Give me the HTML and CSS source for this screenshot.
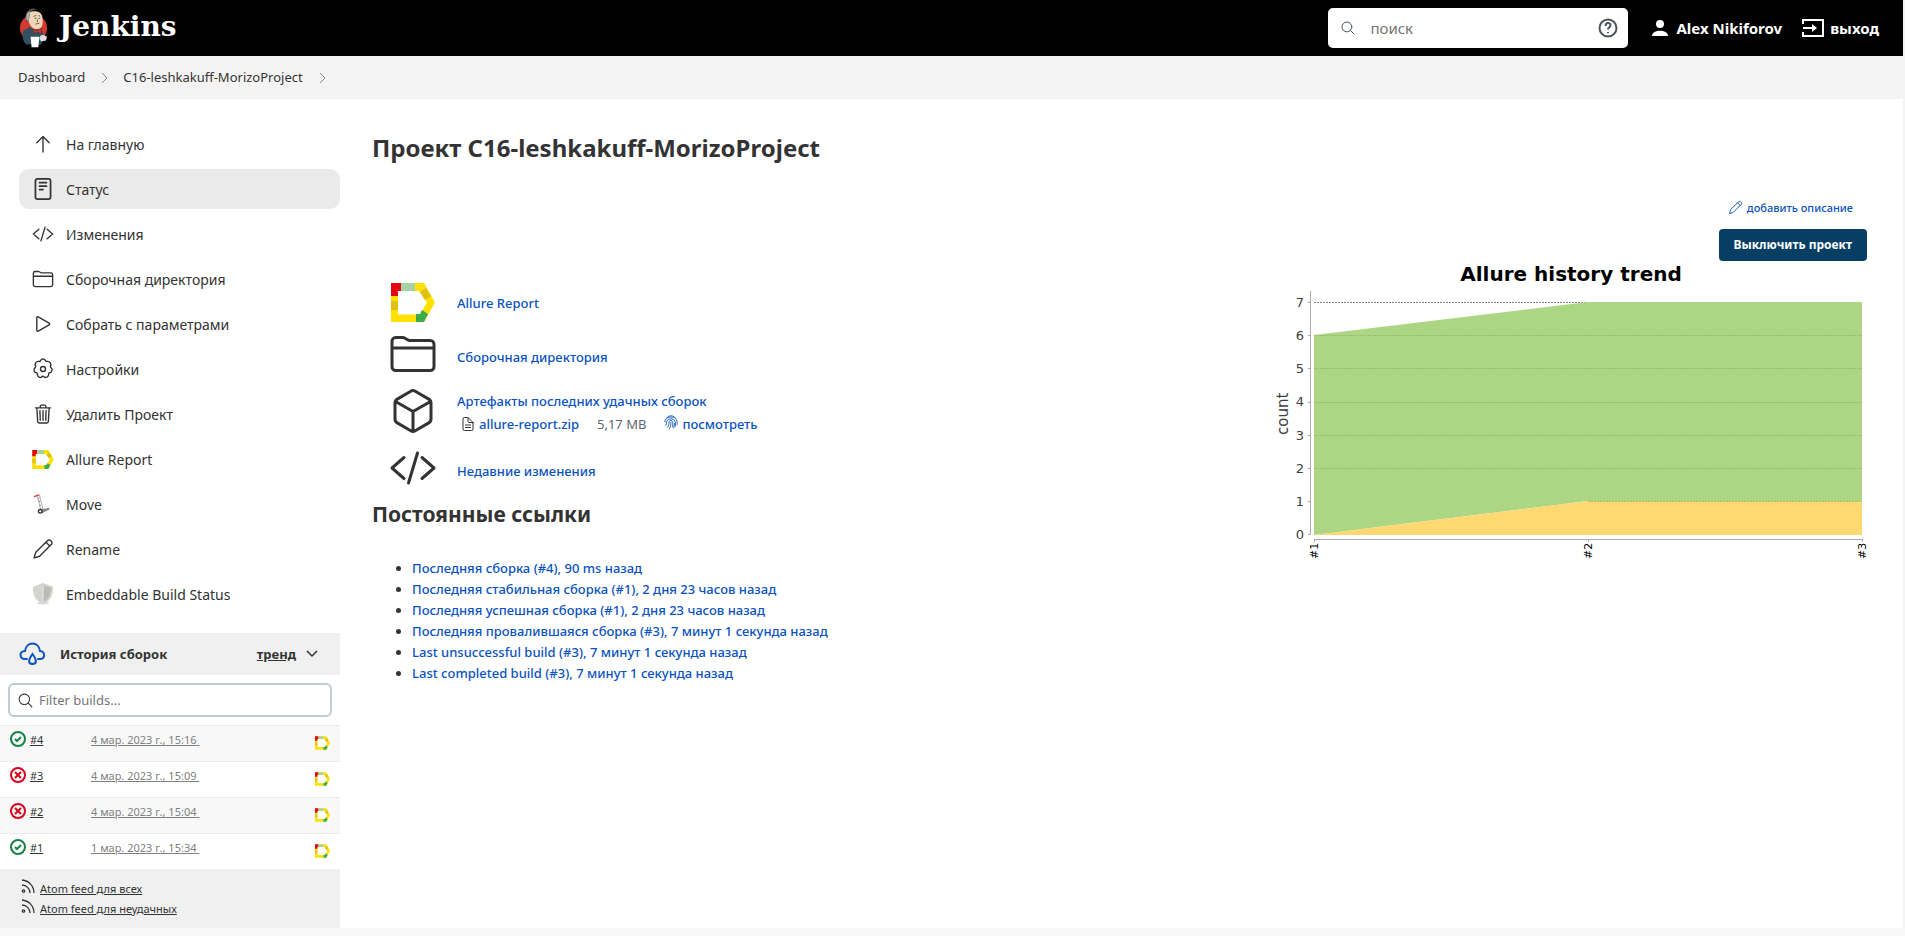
FILE: index.html
```html
<!DOCTYPE html>
<html lang="ru">
<head>
<meta charset="utf-8">
<title>C16-leshkakuff-MorizoProject [Jenkins]</title>
<link rel="stylesheet" href="styles.css">
</head>
<body>
<svg class="defs" aria-hidden="true">
  <symbol id="allure" viewBox="0 0 44 39">
    <path fill="#ffe000" d="M0 0h33l11 19.500-11 19.500H0z"/>
    <path fill="#fff" d="M7 8h21l8 11.500-7 12H7z"/>
    <path fill="#e30613" d="M0 0h10v8H7v5H0z"/>
    <path fill="#a5d1a4" d="M10 0h14v8H10z"/>
    <path fill="#e0c010" d="M0 18h7v9H0zM29 9l6-4 5 8-6 4z"/>
    <path fill="#3cac49" d="M25 31h4l2-4 6 4-4 8h-8z"/>
  </symbol>
  <symbol id="folder" viewBox="0 0 512 512">
    <path d="M440 432H72a40 40 0 01-40-40V120a40 40 0 0140-40h75.890a40 40 0 0122.190 6.720l27.840 18.560a40 40 0 0022.190 6.720H440a40 40 0 0140 40v240a40 40 0 01-40 40zM32 192h448"/>
  </symbol>
  <symbol id="code" viewBox="0 0 512 512">
    <path d="M160 368L32 256l128-112M352 368l128-112-128-112M304 96l-96 320"/>
  </symbol>
  <symbol id="pencil" viewBox="0 0 512 512">
    <path d="M364 60a48 48 0 0168 0l20 20a48 48 0 010 68L178 424 48 464l40-130zM326 98l88 88"/>
  </symbol>
  <symbol id="search" viewBox="0 0 512 512">
    <circle cx="221" cy="221" r="157"/><path d="M338 338l110 110"/>
  </symbol>
  <symbol id="ok" viewBox="0 0 16 16"><circle cx="8" cy="8" r="7"/><path d="M5 8l2 2 4-4"/></symbol>
  <symbol id="fail" viewBox="0 0 16 16"><circle cx="8" cy="8" r="7"/><path d="M5 5l6 6M11 5l-6 6"/></symbol>
  <symbol id="rss" viewBox="0 0 16 16"><path d="M2 1a13 13 0 0112 13M2 6a8 8 0 018 8"/><circle cx="3.500" cy="12" r="1.200"/></symbol>
</svg>
<div class="page">
  <header class="header">
    <a class="brand" href="#">
      <svg class="butler" viewBox="0 0 30 42" aria-hidden="true">
        <circle cx="15" cy="21" r="14" fill="#d33833"/>
        <path fill="#335061" d="M4 24l7-4 5 3 7-1 3 7-3 9H8c-4-2-5-9-4-14z"/>
        <path fill="#f0d6b7" d="M8 8c2-6 15-6 16 1 1 6 1 12-4 13-6 1-9-4-10-8-2-2-3-4-2-6z"/>
        <path fill="#52555c" d="M8 15c-2-5-2-10 3-13 3-2 6-1 7 0-4 0-7 2-7 6l-1 5-1 2z"/>
        <path fill="#b8b6b0" d="M8 13c-1-4 0-8 3-9l1 1c-2 2-2 5-2 8z"/>
        <path fill="none" stroke="#444" stroke-width=".800" d="M15 9l3-1M20 8l2 1M16 11h2M20 11h2M19 12v3M17 17l4-1"/>
        <path fill="#d33833" stroke="#6d1c1a" stroke-width=".500" d="M15 22l4 2 4-3v6l-4-2-3 2z"/>
        <path fill="#fff" d="M12 30h9l-1 11h-7z"/>
        <path fill="#ddd" d="M22 29l3-1 4 2-1 4-5 1-2-3z"/>
      </svg>
      <span class="brand-name">Jenkins</span>
    </a>
    <form class="search" role="search">
      <svg class="icon search-icon"><use href="#search"/></svg>
      <input class="search-input" type="search" placeholder="поиск" aria-label="поиск">
      <a class="help" href="#" aria-label="Справка">
        <svg viewBox="0 0 20 20"><circle cx="10" cy="10" r="8.500"/><path d="M7.500 8c0-4 5-4 5-.800 0 2-2.500 2-2.500 4.300M10 14v1.200"/></svg>
      </a>
    </form>
    <a class="account" href="#">
      <svg class="user-icon" viewBox="0 0 16 18"><circle cx="8" cy="5" r="4"/><path d="M0 17c0-7 16-7 16 0z"/></svg>
      Alex Nikiforov
    </a>
    <a class="account logout" href="#">
      <svg class="logout-icon" viewBox="0 0 22 18"><path d="M1 5V1h20v16H1v-4M1 9h11"/><path class="solid" d="M10 5l5 4-5 4z"/></svg>
      выход
    </a>
  </header>

  <nav class="crumbs" aria-label="Навигация">
    <a href="#">Dashboard</a>
    <svg viewBox="0 0 8 12"><path d="M2 1l5 5-5 5"/></svg>
    <a href="#">C16-leshkakuff-MorizoProject</a>
    <svg viewBox="0 0 8 12"><path d="M2 1l5 5-5 5"/></svg>
  </nav>

  <div class="body">
    <aside class="side">
      <nav class="tasks">
        <a class="task" href="#"><svg class="icon task-icon" viewBox="0 0 512 512"><path d="M112 228L256 84l144 144M256 104v340"/></svg>На главную</a>
        <a class="task active" href="#"><svg class="icon task-icon strong" viewBox="0 0 512 512"><rect x="80" y="20" width="352" height="472" rx="48"/><path d="M176 110h160M176 190h160M176 270h80"/></svg>Статус</a>
        <a class="task" href="#"><svg class="icon task-icon"><use href="#code"/></svg>Изменения</a>
        <a class="task" href="#"><svg class="icon task-icon"><use href="#folder"/></svg>Сборочная директория</a>
        <a class="task" href="#"><svg class="icon task-icon" viewBox="0 0 512 512"><path d="M112 111v290c0 17 18 28 33 20l254-145c15-9 15-31 0-40L145 91c-15-8-33 3-33 20z"/></svg>Собрать с параметрами</a>
        <a class="task" href="#"><svg class="icon task-icon" viewBox="0 0 512 512"><circle cx="256" cy="256" r="58"/><path d="M204 52q12-28 52-28t52 28q10 36 48 26 40-6 66 30t16 66q-24 30 6 52 38 30 18 74-10 40-48 42-34 4-26 44 2 38-40 60-38 22-66-10-26-26-52 0-28 32-66 10-42-22-40-60 8-40-26-44-38-2-48-42-10-44 18-74 30-22 6-52-10-30 16-66t66-30q38 10 48-26z"/></svg>Настройки</a>
        <a class="task" href="#"><svg class="icon task-icon" viewBox="0 0 512 512"><path d="M112 112l20 320c1 20 14 32 32 32h184c18 0 31-12 32-32l20-320M80 112h352M192 112V72c0-14 10-24 24-24h80c14 0 24 10 24 24v40M256 176v224M184 176l8 224M328 176l-8 224"/></svg>Удалить Проект</a>
        <a class="task" href="#"><svg class="task-icon allure"><use href="#allure"/></svg>Allure Report</a>
        <a class="task" href="#"><svg class="task-icon" viewBox="0 0 24 24"><path d="M7 3l4 16" stroke="#aaa" stroke-width="3.500"/><path d="M7 3l4 16" stroke="#fff" stroke-width="1.500"/><path d="M7 5l3 12" stroke="#555" stroke-dasharray="1 3"/><path d="M2 4l6-2" stroke="#e33" stroke-width="1.500"/><path d="M9 18l10-2v2l-8 4z" fill="#888"/><circle cx="9" cy="20" r="2" fill="#fff" stroke="#333" stroke-width="1.500"/></svg>Move</a>
        <a class="task" href="#"><svg class="icon task-icon"><use href="#pencil"/></svg>Rename</a>
        <a class="task" href="#"><svg class="task-icon" viewBox="0 0 24 24"><ellipse cx="12" cy="22" rx="7" ry="1.500" fill="#ddd"/><path d="M12 0l11 4c0 9-2 15-11 19C3 19 1 13 1 4z" fill="#d3d4d0"/><path d="M12 3v18c7-3 8-9 9-16z" fill="#b9bbb6"/><path d="M12 3v18" stroke="#eee"/></svg>Embeddable Build Status</a>
      </nav>

      <section class="history">
        <div class="history-head">
          <svg class="cloud" viewBox="0 0 26 24"><path d="M8 17H6C0 17 0 9 6 9c1-10 14-10 15 0 5 0 6 8 0 8h-2"/><path d="M13.500 12c-5 7-4 10 0 10s5-3 0-10z"/></svg>
          <span class="history-title">История сборок</span>
          <a class="trend" href="#">тренд</a>
          <svg class="chevron" viewBox="0 0 12 8"><path d="M1 1l5 5 5-5"/></svg>
        </div>
        <div class="filter">
          <svg class="icon filter-icon"><use href="#search"/></svg>
          <input class="filter-input" type="search" placeholder="Filter builds..." aria-label="Filter builds">
        </div>
        <ul class="builds">
          <li class="build"><svg class="state ok"><use href="#ok"/></svg><a class="num" href="#">#4</a><a class="date" href="#">4 мар. 2023 г., 15:16&nbsp;</a><svg class="build-allure"><use href="#allure"/></svg></li>
          <li class="build"><svg class="state fail"><use href="#fail"/></svg><a class="num" href="#">#3</a><a class="date" href="#">4 мар. 2023 г., 15:09&nbsp;</a><svg class="build-allure"><use href="#allure"/></svg></li>
          <li class="build"><svg class="state fail"><use href="#fail"/></svg><a class="num" href="#">#2</a><a class="date" href="#">4 мар. 2023 г., 15:04&nbsp;</a><svg class="build-allure"><use href="#allure"/></svg></li>
          <li class="build"><svg class="state ok"><use href="#ok"/></svg><a class="num" href="#">#1</a><a class="date" href="#">1 мар. 2023 г., 15:34&nbsp;</a><svg class="build-allure"><use href="#allure"/></svg></li>
        </ul>
        <div class="feeds">
          <div class="feed"><svg><use href="#rss"/></svg><a href="#">Atom feed для всех</a></div>
          <div class="feed"><svg><use href="#rss"/></svg><a href="#">Atom feed для неудачных</a></div>
        </div>
      </section>
    </aside>

    <main class="main">
      <h1>Проект C16-leshkakuff-MorizoProject</h1>
      <div class="actions">
        <a class="describe" href="#"><svg class="icon"><use href="#pencil"/></svg>добавить описание</a>
        <button class="disable" type="button">Выключить проект</button>
      </div>
      <div class="columns">
        <div class="overview">
          <div class="links">
            <div class="link-row"><svg class="big allure"><use href="#allure"/></svg><a href="#">Allure Report</a></div>
            <div class="link-row low"><svg class="icon big"><use href="#folder"/></svg><a href="#">Сборочная директория</a></div>
            <div class="link-row artifacts"><svg class="icon big" viewBox="0 0 512 512"><path d="M448 341V171a48 48 0 00-24-42L280 45a48 48 0 00-48 0L88 129a48 48 0 00-24 42v170a48 48 0 0024 42l144 84a48 48 0 0048 0l144-84a48 48 0 0024-42zM69 154l187 108 187-108M256 474V262"/></svg>
              <div class="artifact-text">
                <a href="#">Артефакты последних удачных сборок</a>
                <div class="file">
                  <svg class="icon file-icon" viewBox="0 0 512 512"><path d="M416 221v195a48 48 0 01-48 48H144a48 48 0 01-48-48V96a48 48 0 0148-48h99a32 32 0 0123 9l141 141a32 32 0 019 23zM256 56v120a32 32 0 0032 32h120M176 288h160M176 368h160"/></svg>
                  <a href="#">allure-report.zip</a>
                  <span class="size">5,17 MB</span>
                  <a class="view" href="#"><svg class="print" viewBox="0 0 16 18"><path d="M3 2q5-5 10 0M1 7q0-6 7-6t7 6v3M2 11q1-2 1-5 1-3 5-3t5 4v5M4 13q2-3 2-7 2-3 4 1v6M6 15q2-3 2-8M11 14q1-3 1-6"/></svg>посмотреть</a>
                </div>
              </div>
            </div>
            <div class="link-row low"><svg class="icon big"><use href="#code"/></svg><a href="#">Недавние изменения</a></div>
          </div>
          <h2>Постоянные ссылки</h2>
          <ul class="permalinks">
            <li><a href="#">Последняя сборка (#4), 90 ms назад</a></li>
            <li><a href="#">Последняя стабильная сборка (#1), 2 дня 23 часов назад</a></li>
            <li><a href="#">Последняя успешная сборка (#1), 2 дня 23 часов назад</a></li>
            <li><a href="#">Последняя провалившаяся сборка (#3), 7 минут 1 секунда назад</a></li>
            <li><a href="#">Last unsuccessful build (#3), 7 минут 1 секунда назад</a></li>
            <li><a href="#">Last completed build (#3), 7 минут 1 секунда назад</a></li>
          </ul>
        </div>
        <svg class="chart" viewBox="0 0 600 300" role="img" aria-label="Allure history trend">
          <text class="chart-title" x="304" y="20">Allure history trend</text>
          <g class="grid"><path d="M47 41.500h548"/></g>
          <path fill="#add684" d="M47 74L321 41H595V240H321L47 274z"/>
          <path fill="#ffd871" d="M47 274L321 240H595V274z"/>
          <g class="grid over"><path d="M47 74.500h548M47 107.500h548M47 141.500h548M47 174.500h548M47 207.500h548M321 240.500h274"/></g>
          <path class="axis" d="M43.500 30v244M41 41.500h3M41 74.500h3M41 107.500h3M41 141.500h3M41 174.500h3M41 207.500h3M41 240.500h3M41 273.500h3M47 278.500h549M47.500 278v3M321.500 278v3M595.500 278v3"/>
          <g class="ticks"><text x="37" y="46">7</text><text x="37" y="79">6</text><text x="37" y="112">5</text><text x="37" y="145">4</text><text x="37" y="179">3</text><text x="37" y="212">2</text><text x="37" y="245">1</text><text x="37" y="278">0</text></g>
          <text class="count" transform="translate(21 174) rotate(-90)">count</text>
          <g class="runs"><text transform="translate(51 298) rotate(-90)">#1</text><text transform="translate(325 298) rotate(-90)">#2</text><text transform="translate(599 298) rotate(-90)">#3</text></g>
        </svg>
      </div>
    </main>
  </div>
</div>
</body>
</html>
```
FILE: styles.css
```css
* { box-sizing: border-box; }
body {
  margin: 0;
  background: #f8f8f8;
  color: #333;
  font-family: "Noto Sans", sans-serif;
  font-size: 13px;
  line-height: 21px;
}
a { color: inherit; text-decoration: none; }
svg { flex: none; display: block; overflow: visible; }
.defs { position: absolute; width: 0; height: 0; }
.icon { fill: none; stroke: currentColor; stroke-width: 32; stroke-linecap: round; stroke-linejoin: round; }
.page { border-right: 2px solid #f3f3f3; }

.header {
  display: flex;
  align-items: center;
  height: 56px;
  padding: 0 24px 0 19px;
  background: #000;
  color: #fff;
}
.brand { display: flex; align-items: center; gap: 11px; margin-right: auto; }
.butler { width: 29px; height: 42px; }
.brand-name { font: bold 28px/36px "DejaVu Serif", serif; padding-bottom: 2px; }
.search {
  display: flex;
  align-items: center;
  width: 300px;
  height: 40px;
  padding: 0 10px 0 12px;
  border-radius: 5px;
  background: #fff;
  color: #4d545d;
}
.search-icon { width: 16px; height: 16px; }
.search-input {
  flex: 1;
  min-width: 0;
  padding: 0 14px;
  border: 0;
  background: none;
  font: 15px/24px "Noto Sans", sans-serif;
}
input::placeholder { color: #757575; opacity: 1; }
.help svg { width: 20px; height: 20px; fill: none; stroke: currentColor; stroke-width: 2; }
.account { display: flex; align-items: center; gap: 8px; margin-left: 24px; font-size: 15px; font-weight: 700; }
.logout { margin-left: 20px; gap: 6px; }
.user-icon { width: 16px; height: 18px; fill: #fff; }
.logout-icon { width: 22px; height: 18px; fill: none; stroke: #fff; stroke-width: 2; }
.logout-icon .solid { fill: #fff; stroke: none; }

.crumbs { display: flex; align-items: center; gap: 15px; height: 43px; padding: 0 18px; background: #f3f3f3; }
.crumbs svg { width: 8px; height: 12px; fill: none; stroke: #888; stroke-width: 1; }

.body { display: flex; background: #fff; }
.side { flex: 0 0 340px; padding-top: 25px; }
.tasks { display: flex; flex-direction: column; gap: 5px; padding-left: 19px; font-size: 14px; }
.task { display: flex; align-items: center; gap: 12px; height: 40px; padding-left: 13px; border-radius: 10px; }
.task.active { background: #eaeaea; }
.task-icon { width: 22px; height: 22px; fill: none; }
.task-icon.strong { stroke-width: 40; }
.task-icon.allure { height: 19px; }

.history { margin-top: 19px; }
.history-head { display: flex; align-items: center; height: 42px; padding: 0 22px 0 19px; background: #f0f0f0; font-weight: 700; }
.cloud { width: 26px; height: 24px; margin-right: 15px; fill: none; stroke: #0b53bf; stroke-width: 2; stroke-linecap: round; }
.trend { margin: 0 10px 0 auto; text-decoration: underline; }
.chevron { width: 12px; height: 8px; fill: none; stroke: #333; stroke-width: 1.5; }
.filter {
  display: flex;
  align-items: center;
  gap: 5px;
  height: 34px;
  margin: 8px;
  padding: 0 7px;
  border: 2px solid #c2cbcf;
  border-radius: 6px;
}
.filter-icon { width: 17px; height: 17px; }
.filter-input { flex: 1; min-width: 0; padding: 0; border: 0; background: none; font: 13px/21px "Noto Sans", sans-serif; }
.builds { margin: 0; padding: 0; list-style: none; font-size: 11px; line-height: 18px; }
.build { display: flex; align-items: flex-start; height: 36px; padding: 5px 10px; border-top: 1px solid #ececec; }
.build:nth-child(odd) { background: #f8f8f8; }
.state { width: 16px; height: 16px; margin-right: 4px; fill: none; stroke-width: 2; }
.state.ok { stroke: #138347; }
.state.fail { stroke: #d9001b; }
.num { width: 61px; text-decoration: underline; }
.date { color: #808080; text-decoration: underline; }
.build-allure { width: 15px; height: 14px; margin: 5px 0 0 auto; }
.feeds { padding: 10px 20px 9px; background: #f0f0f0; font-size: 11px; line-height: 20px; }
.feed { display: flex; gap: 4px; }
.feed svg { width: 16px; height: 16px; fill: none; stroke: #333; stroke-width: 1.3; }
.feed a { text-decoration: underline; }

.main { flex: 1; min-width: 0; padding: 31px 36px 0 32px; }
h1 { margin: 0; font-size: 24px; line-height: 36px; font-weight: 700; }
.actions { display: flex; flex-direction: column; align-items: flex-end; gap: 11px; padding-top: 31px; font-size: 11px; font-weight: 500; }
.describe { display: flex; align-items: center; gap: 4px; margin-right: 14px; color: #0b53bf; }
.describe svg { width: 15px; height: 15px; }
.disable {
  height: 32px;
  padding: 0 15px;
  border: 0;
  border-radius: 4px;
  background: #063f63;
  color: #fff;
  font: bold 12px/18px "Noto Sans", sans-serif;
}
.columns { display: flex; justify-content: space-between; }
.overview { padding-top: 15px; }
.overview a { color: #0b53bf; font-weight: 500; }
.links { padding-left: 17px; }
.link-row { display: flex; align-items: center; gap: 20px; min-height: 52px; }
.link-row > a { padding-top: 3px; }
.link-row.low > a { padding-top: 7px; }
.big { width: 48px; height: 48px; }
.big.allure { height: 39px; }
.artifacts { min-height: 62px; }
.artifact-text { display: flex; flex-direction: column; gap: 2px; padding-top: 3px; }
.file { display: flex; align-items: center; padding-left: 3px; }
.file-icon { width: 16px; height: 16px; margin-right: 3px; }
.size { margin: 0 18px; color: #5f6670; }
.view { display: flex; align-items: center; gap: 4px; }
.print { width: 14px; height: 18px; fill: none; stroke: #0b53bf; stroke-width: 1; }
h2 { margin: 0; padding-top: 5px; font-size: 21px; line-height: 30px; }
.permalinks { margin: 0; padding: 29px 0 0 40px; }

.chart { width: 600px; height: 300px; font-family: "DejaVu Sans", sans-serif; }
.chart-title { font-size: 20px; font-weight: 700; text-anchor: middle; fill: #000; }
.grid { fill: none; stroke: #888; stroke-width: 1; stroke-dasharray: 2 1; }
.grid.over { stroke: #96bd6e; }
.axis { fill: none; stroke: #aaa; stroke-width: 1; }
.ticks { font-size: 13px; text-anchor: end; fill: #404040; }
.count { font-size: 15px; fill: #404040; }
.runs { font-size: 11px; fill: #000; }
```
